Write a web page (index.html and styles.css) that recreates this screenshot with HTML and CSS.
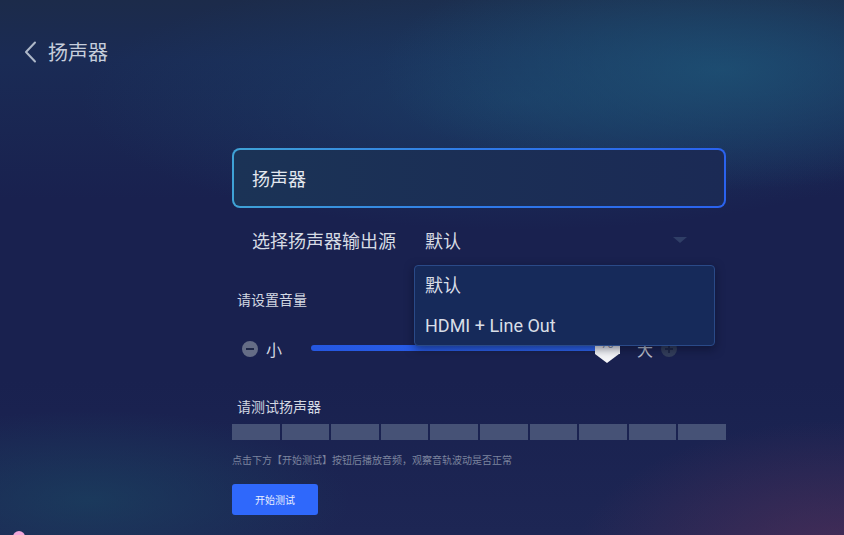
FILE: index.html
```html
<!DOCTYPE html>
<html lang="zh-CN">
<head>
<meta charset="utf-8">
<title>扬声器</title>
<link rel="stylesheet" href="styles.css">
</head>
<body>
<div class="screen">
  <header class="header">
    <svg class="back" width="14" height="22" viewBox="0 0 14 22"><path d="M12 1.5 L3 11 L12 20.5" fill="none" stroke="#aeb8c8" stroke-width="2" stroke-linecap="round" stroke-linejoin="round"/></svg>
    <span class="title">扬声器</span>
  </header>

  <main class="panel">
    <div class="name-box">扬声器</div>

    <div class="select-row">
      <span class="select-label">选择扬声器输出源</span>
      <span class="select-value">默认</span>
      <span class="caret"></span>
      <ul class="menu">
        <li class="menu-item">默认</li>
        <li class="menu-item">HDMI + Line Out</li>
      </ul>
    </div>

    <div class="section-label vol-label">请设置音量</div>
    <div class="volume-row">
      <span class="round-btn minus"><span class="bar-h"></span></span>
      <span class="vol-text">小</span>
      <div class="slider">
        <div class="track-fill"></div>
        <div class="thumb"><span class="thumb-num">70</span></div>
      </div>
      <span class="vol-text big">大</span>
      <span class="round-btn plus"><span class="bar-h"></span><span class="bar-v"></span></span>
    </div>

    <div class="section-label test-label">请测试扬声器</div>
    <div class="meter">
      <span class="seg"></span><span class="seg"></span><span class="seg"></span><span class="seg"></span><span class="seg"></span>
      <span class="seg"></span><span class="seg"></span><span class="seg"></span><span class="seg"></span><span class="seg"></span>
    </div>
    <p class="hint">点击下方【开始测试】按钮后播放音频，观察音轨波动是否正常</p>
    <button class="start-btn">开始测试</button>
  </main>
  <span class="dot"></span>
</div>
</body>
</html>
```

FILE: styles.css
```css
html, body {
  margin: 0;
  padding: 0;
}
body {
  width: 844px;
  height: 535px;
  overflow: hidden;
  font-family: Roboto, "Noto Sans CJK SC", sans-serif;
  color: #d3d8e2;
}
.screen {
  position: relative;
  width: 844px;
  height: 535px;
  overflow: hidden;
  background:
    radial-gradient(ellipse 340px 120px at 720px 70px, rgba(30, 85, 120, 0.75), rgba(30, 85, 120, 0) 100%),
    radial-gradient(ellipse 440px 130px at 520px 100px, rgba(28, 70, 110, 0.6), rgba(28, 70, 110, 0) 100%),
    radial-gradient(ellipse 270px 140px at 844px 560px, rgba(78, 46, 88, 0.85), rgba(78, 46, 88, 0) 100%),
    radial-gradient(ellipse 260px 90px at 90px 500px, rgba(26, 66, 96, 0.7), rgba(26, 66, 96, 0) 100%),
    linear-gradient(180deg, #1c2b4a 0px, #1a2b55 60px, #19214f 200px, #19214f 380px, #1d2654 535px);
}
.header {
  display: flex;
  align-items: center;
  gap: 11px;
  padding: 40px 0 0 23px;
  height: 24px;
}
.back {
  display: block;
}
.title {
  font-size: 20px;
  line-height: 24px;
  color: #c6cedc;
  font-family: "Noto Sans CJK SC", sans-serif;
}
.panel {
  width: 494px;
  margin: 84px 0 0 232px;
}
.name-box {
  box-sizing: border-box;
  height: 60px;
  border-radius: 8px;
  border: 2px solid transparent;
  background:
    linear-gradient(90deg, #1b3356, #1b2a55) padding-box,
    linear-gradient(90deg, #3fa2d6, #2f7ae8 50%, #2a62ee) border-box;
  padding-left: 18px;
  display: flex;
  align-items: center;
  font-size: 18px;
  color: #e3e7ee;
}
.select-row {
  position: relative;
  height: 40px;
  margin-top: 12px;
  padding-left: 20px;
  display: flex;
  align-items: center;
  font-size: 18px;
}
.select-label {
  width: 173px;
  color: #d6dbe4;
}
.select-value {
  color: #d6dbe4;
}
.caret {
  margin-left: auto;
  margin-right: 39px;
  width: 0;
  height: 0;
  border-left: 7px solid transparent;
  border-right: 7px solid transparent;
  border-top: 6px solid #2f3e66;
}
.menu {
  position: absolute;
  z-index: 5;
  left: 182px;
  top: 45px;
  width: 301px;
  box-sizing: border-box;
  height: 81px;
  margin: 0;
  padding: 0;
  list-style: none;
  background: #162a5a;
  border: 1px solid #2a4a88;
  border-radius: 4px;
  box-shadow: 0 3px 10px rgba(5, 10, 30, 0.5);
}
.menu-item {
  height: 40px;
  line-height: 40px;
  padding-left: 10px;
  font-size: 18px;
  color: #d9dee7;
}
.section-label {
  font-size: 14px;
  color: #d3d8e2;
  padding-left: 5px;
  line-height: 20px;
}
.vol-label {
  margin-top: 30px;
}
.volume-row {
  display: flex;
  align-items: center;
  height: 30px;
  margin-top: 24px;
  padding-left: 10px;
}
.round-btn {
  position: relative;
  width: 16px;
  height: 16px;
  border-radius: 50%;
  flex: none;
}
.minus {
  background: #656d86;
}
.plus {
  background: #343f5c;
  margin-left: 8px;
}
.bar-h {
  position: absolute;
  left: 4px;
  top: 7px;
  width: 8px;
  height: 2px;
  background: #1f2848;
}
.bar-v {
  position: absolute;
  left: 7px;
  top: 4px;
  width: 2px;
  height: 8px;
  background: #1f2848;
}
.vol-text {
  font-size: 16px;
  color: #d3d8e2;
  margin-left: 8px;
  font-family: "Noto Sans CJK SC", sans-serif;
}
.vol-text.big {
  margin-left: 17px;
  color: #b9bfcc;
}
.slider {
  position: relative;
  width: 309px;
  height: 30px;
  margin-left: 29px;
}
.track-fill {
  position: absolute;
  left: 0;
  top: 11px;
  width: 297px;
  height: 6px;
  border-radius: 3px;
  background: linear-gradient(90deg, #2557e0, #2e66f2);
}
.thumb {
  position: absolute;
  left: 284px;
  top: -1px;
  width: 25px;
  height: 21px;
  background: #f4f5f8;
  border-radius: 4px 4px 0 0;
}
.thumb::after {
  content: "";
  position: absolute;
  left: 0;
  top: 21px;
  border-left: 12.5px solid transparent;
  border-right: 12.5px solid transparent;
  border-top: 9px solid #f4f5f8;
}
.thumb-num {
  display: block;
  margin-top: 6px;
  text-align: center;
  font-size: 11px;
  line-height: 12px;
  color: #8a90a4;
}
.test-label {
  margin-top: 33px;
}
.meter {
  display: flex;
  gap: 2px;
  margin-top: 7px;
  height: 16px;
}
.seg {
  flex: 1;
  background: #465276;
}
.hint {
  margin: 13px 0 0 0;
  font-size: 10px;
  line-height: 14px;
  color: #7b849e;
  font-family: "Noto Sans CJK SC", sans-serif;
}
.start-btn {
  display: block;
  margin-top: 17px;
  width: 86px;
  height: 31px;
  border: none;
  border-radius: 3px;
  background: #2f68fb;
  color: #e8eeff;
  font-size: 10px;
  font-family: "Noto Sans CJK SC", sans-serif;
  padding: 0;
}
.dot {
  position: absolute;
  left: 13px;
  top: 531px;
  width: 12px;
  height: 12px;
  border-radius: 50%;
  background: #f3a8da;
}
```
